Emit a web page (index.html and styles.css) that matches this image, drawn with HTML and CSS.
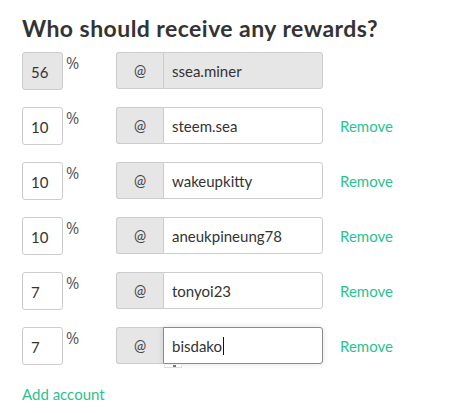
FILE: index.html
```html
<!DOCTYPE html>
<html>
<head>
<meta charset="utf-8">
<link rel="stylesheet" href="styles.css">
</head>
<body>
<div class="page">
  <h2 class="title">Who should receive any rewards?</h2>
  <div class="rows">
    <div class="row">
      <div class="pct"><div class="pct-input disabled">56</div><span class="pct-sign">%</span></div>
      <div class="group"><span class="addon">@</span><div class="name disabled">ssea.miner</div></div>
    </div>
    <div class="row">
      <div class="pct"><div class="pct-input">10</div><span class="pct-sign">%</span></div>
      <div class="group"><span class="addon">@</span><div class="name">steem.sea</div></div>
      <a class="remove">Remove</a>
    </div>
    <div class="row">
      <div class="pct"><div class="pct-input">10</div><span class="pct-sign">%</span></div>
      <div class="group"><span class="addon">@</span><div class="name">wakeupkitty</div></div>
      <a class="remove">Remove</a>
    </div>
    <div class="row">
      <div class="pct"><div class="pct-input">10</div><span class="pct-sign">%</span></div>
      <div class="group"><span class="addon">@</span><div class="name">aneukpineung78</div></div>
      <a class="remove">Remove</a>
    </div>
    <div class="row">
      <div class="pct"><div class="pct-input">7</div><span class="pct-sign">%</span></div>
      <div class="group"><span class="addon">@</span><div class="name">tonyoi23</div></div>
      <a class="remove">Remove</a>
    </div>
    <div class="row">
      <div class="pct"><div class="pct-input">7</div><span class="pct-sign">%</span></div>
      <div class="group"><span class="addon">@</span><div class="name focused">bisdako<span class="caret"></span><span class="handle"><span class="dot"></span></span></div></div>
      <a class="remove">Remove</a>
    </div>
  </div>
  <a class="add">Add account</a>
</div>
</body>
</html>
```
FILE: styles.css
```css
html, body { margin: 0; padding: 0; background: #fff; }
body { font-family: Lato, "Open Sans", sans-serif; color: #333; }
.page { padding: 12px 0 0 22px; }
.title {
  margin: 0;
  font-size: 23px;
  font-weight: 700;
  color: #333;
  line-height: 32px;
  letter-spacing: 0.45px;
}
.rows { display: flex; flex-direction: column; gap: 17px; margin-top: 8px; }
.row { display: flex; align-items: flex-start; height: 38px; }
.pct { display: flex; align-items: flex-start; width: 94px; }
.pct-input {
  box-sizing: border-box;
  width: 41px; height: 38px;
  border: 1px solid #ccc; border-radius: 3px;
  padding: 0 0 0 8px;
  display: flex; align-items: center;
  font-size: 15px; padding-top: 2px;
  background: #fff;
}
.pct-input.disabled { background: #e6e6e6; }
.pct-sign {
  font-family: "Open Sans", sans-serif;
  font-size: 16px; line-height: 20px;
  margin: 1px 0 0 3px; color: #555;
}
.group {
  display: flex; width: 207px; height: 37px; box-sizing: border-box;
}
.addon {
  box-sizing: border-box;
  width: 47px; height: 37px;
  background: #e6e6e6;
  border: 1px solid #ccc; border-right: none;
  border-radius: 3px 0 0 3px;
  display: flex; align-items: center; justify-content: center;
  font-size: 14.5px; color: #444;
}
.name {
  position: relative;
  box-sizing: border-box;
  flex: 1; height: 37px;
  border: 1px solid #ccc;
  border-radius: 0 3px 3px 0;
  display: flex; align-items: center;
  padding-left: 8px;
  font-size: 15px;
  background: #fff;
}
.name.disabled { background: #e6e6e6; }
.name.focused {
  border-color: #8a8a8a;
  box-shadow: 0 0 6px rgba(0,0,0,0.12);
}
.caret { display: inline-block; width: 1px; height: 18px; background: #111; margin-left: 1px; }
.handle {
  position: absolute; left: 0; top: 37px;
  width: 18px; height: 3px;
  border: 1px solid #ddd; border-top: none; box-sizing: border-box;
  background: #fff;
}
.dot { position: absolute; left: 8px; top: 0; width: 3px; height: 2px; background: #777; }
.remove {
  margin-left: 17px;
  align-self: center;
  font-size: 15px;
  color: #2ac28f;
  cursor: pointer;
}
.add {
  display: block;
  margin-top: 20px;
  font-size: 15px;
  color: #2ac28f;
}
```
